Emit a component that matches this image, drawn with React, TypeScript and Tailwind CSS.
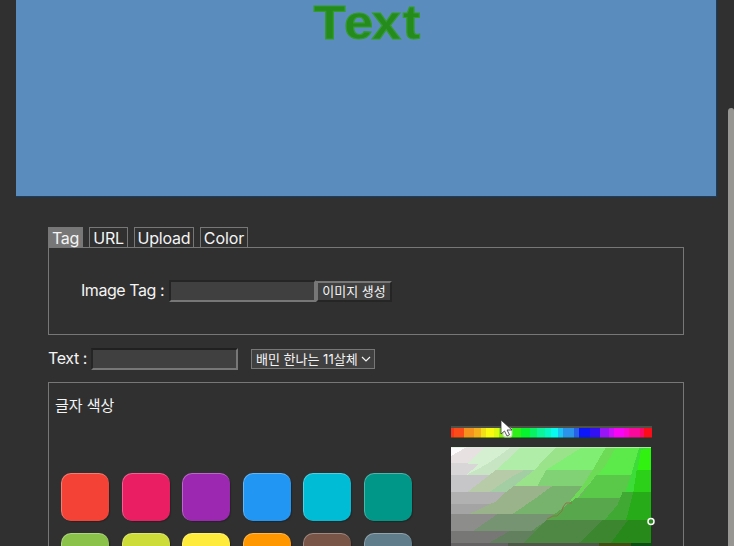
import type { ReactNode } from "react";

const swatches = [
  "bg-[#f44336]", "bg-[#e91e63]", "bg-[#9c27b0]", "bg-[#2196f3]", "bg-[#00bcd4]", "bg-[#009688]",
  "bg-[#8bc34a]", "bg-[#cddc39]", "bg-[#ffeb3b]", "bg-[#ff9800]", "bg-[#795548]", "bg-[#607d8b]",
];

// Each hue runs from its start position to the right end, under the next one.
const hues: [number, string][] = [
  [0, "#fb3519"], [3, "#fb4b18"], [13, "#f5921d"], [23, "#f5b01d"], [30, "#f0df17"], [35, "#f8fa10"], [43, "#dcfa10"],
  [48, "#8bed10"], [61, "#30ee18"], [70, "#06f430"], [79, "#08f264"], [86, "#0cf59b"], [94, "#08f8c4"], [100, "#08faf0"],
  [107, "#1cc4f4"], [112, "#2b93ea"], [123, "#2661e8"], [128, "#0c16f8"], [139, "#3310f4"], [149, "#9815f8"],
  [158, "#cb10f8"], [163, "#f805f5"], [173, "#fa08d2"], [178, "#fb089c"], [189, "#fb0868"], [193, "#fb0c18"],
];

// Saturation and brightness bands, painted back to front.
const shades: [string, string][] = [
  ["15,97 615,97 615,145 15,145", "#e8e1e1"],
  ["15,97 62,97 15,124", "#fdfbfc"],
  ["15,145 615,145 615,182 15,182", "#d8d6d6"],
  ["15,182 615,182 615,232 15,232", "#c6c5c7"],
  ["15,232 615,232 615,268 15,268", "#b2b1b1"],
  ["15,268 615,268 615,298 15,298", "#a5a4a4"],
  ["15,298 615,298 615,350 15,350", "#8d8d8c"],
  ["15,350 615,350 615,384 15,384", "#777876"],
  ["15,384 615,384 615,396 15,396", "#646263"],
  ["115,97 615,97 615,182 60,182 100,147 65,147", "#d5efd1"],
  ["195,97 615,97 615,182 60,182 125,147 165,120", "#c7e5c2"],
  ["150,166 615,166 615,232 65,232", "#b8cba8"],
  ["235,166 615,166 615,232 130,232 200,185", "#a3cea3"],
  ["225,97 615,97 615,166 150,166 190,130", "#b0eda8"],
  ["330,97 615,97 615,213 205,213 265,166", "#9be38b"],
  ["410,97 615,97 615,166 300,166", "#80ee72"],
  ["300,166 615,166 615,213 275,213", "#80d275"],
  ["205,213 615,213 615,298 70,298 150,260 180,232", "#9bb38b"],
  ["320,213 615,213 615,298 200,298 270,250", "#78b36e"],
  ["155,298 615,298 615,350 80,350", "#769472"],
  ["330,298 615,298 615,350 255,350", "#5c8f52"],
  ["190,350 615,350 615,384 130,384", "#63805e"],
  ["480,97 615,97 615,182 450,182 385,262 370,262 410,213 440,166", "#6edb57"],
  ["390,250 615,250 615,317 300,317 370,265", "#59a74d"],
  ["450,182 615,182 615,250 400,250", "#5ac949"],
  ["510,97 615,97 615,182 455,182 480,150", "#5bea49"],
  ["580,97 615,97 615,232 538,232 555,182", "#3edc38"],
  ["530,232 615,232 615,317 475,317 515,270", "#40a934"],
  ["585,106 615,100 615,166 575,166", "#30f110"],
  ["572,166 615,166 615,232 562,232", "#2dd018"],
  ["562,232 615,232 615,317 540,317 550,280", "#28ab19"],
  ["300,317 615,317 615,384 235,384", "#4f8845"],
  ["470,317 615,317 615,384 400,384", "#3d8630"],
  ["545,317 615,317 615,384 495,384", "#27891a"],
  ["185,384 615,384 615,396 185,396", "#50584a"],
  ["460,384 555,384 555,396 460,396", "#444d17"],
  ["555,384 615,384 615,396 555,396", "#104c18"],
];

function Tab({ children, className }: { children: ReactNode; className: string }) {
  return <button className={`h-[21px] border border-[#777] text-base leading-[20px] whitespace-nowrap ${className}`}>{children}</button>;
}

function ColorPicker() {
  return (
    <svg width="206" height="131" viewBox="0 0 206 131" className="block overflow-visible">
      <rect x="0" y="11.5" width="201" height="1" fill="#68705f" />
      {hues.map(([start, color]) => (
        <rect key={start} x={start} y="13" width={201 - start} height="10" fill={color} />
      ))}
      <rect x="0" y="22" width="201" height="2" fill="#143d18" opacity=".5" />
      <g transform="translate(0 32)">
        <g transform="scale(.33333) translate(-15 -97)" shapeRendering="crispEdges">
          {shades.map(([points, fill], i) => <polygon key={i} points={points} fill={fill} />)}
        </g>
        <path d="M0 .5H200" stroke="#d9efd5" opacity=".65" />
        <path d="M200.5 0V99" stroke="#124414" />
        <path d="M96 72l6-3h4l5-5 1-4 3-4h6" fill="none" stroke="#8c7645" />
      </g>
      <rect x="52" y="13" width="9" height="9" rx="2" fill="#f6f8f4" stroke="#b5d7a6" />
      <circle cx="200" cy="106.5" r="3" fill="#27891a" stroke="#fff" strokeWidth="1.5" />
      <path d="M50 5v14l3.5-3 2.5 5 2.5-1.2-2.4-4.8H61z" fill="#fff" stroke="#333" strokeWidth=".8" />
    </svg>
  );
}

export default function App() {
  return (
    <div className="relative h-[546px] w-[734px] overflow-hidden bg-[#303030] font-['Inter','Noto_Sans_CJK_KR',sans-serif] text-[#f4f4f4]">
      <header className="ml-4 h-[197px] w-[701px] border-r border-b border-[#173f65] bg-[#5a8dbe]">
        <h1>
          <svg width="700" height="60" className="block overflow-visible">
            <text transform="scale(1.07 1)" x="278 306.5 332.5 361.5" y="39" className="fill-[#268b1d] stroke-[#329d29] font-['Liberation_Sans',sans-serif] text-[49px] font-bold [stroke-width:1.2px]">Text</text>
          </svg>
        </h1>
      </header>
      <main className="ml-12 w-[636px] pt-[30px]">
        <nav className="flex gap-[6px]">
          <Tab className="w-[35px] bg-[#777] tracking-[-0.4px]">Tag</Tab>
          <Tab className="w-[39px] tracking-[-0.3px]">URL</Tab>
          <Tab className="w-[60px] tracking-[-0.2px]">Upload</Tab>
          <Tab className="w-[48px] tracking-[-0.1px]">Color</Tab>
        </nav>
        <section className="-mt-px flex h-[88px] items-center border border-[#777] pl-8">
          <label className="w-[88px] pb-[2px] whitespace-nowrap tracking-[-0.45px]">Image Tag :</label>
          <input className="h-[22px] w-[147px] border-2 border-t-[#252525] border-r-[#777] border-b-[#777] border-l-[#252525] bg-[#404040]" />
          <button className="h-[21px] w-[76px] border-2 border-t-[#777] border-r-[#252525] border-b-[#252525] border-l-[#777] bg-[#404040] text-[13px] leading-[15px] whitespace-nowrap">이미지 생성</button>
        </section>
        <div className="flex h-[47px] items-center">
          <label className="w-[43px] pb-[2px] whitespace-nowrap tracking-[-0.4px]">Text :</label>
          <input className="h-[22px] w-[147px] border-2 border-t-[#202020] border-r-[#777] border-b-[#777] border-l-[#252525] bg-[#404040]" />
          <button className="ml-[13px] flex h-5 w-[124px] items-center justify-between border border-[#777] bg-[#404040] pr-[3px] pl-1 text-[13px] leading-[18px] whitespace-nowrap">
            배민 한나는 11살체
            <svg width="10" height="8" viewBox="0 0 10 8" fill="none" stroke="currentColor" strokeWidth="1.2"><path d="m1 2 4 4 4-4" /></svg>
          </button>
        </div>
        <section className="flex h-[300px] border border-[#777]">
          <div className="w-[402px]">
            <h2 className="pt-[10px] pl-[6px] text-[15px] leading-[26px]">글자 색상</h2>
            <div className="mt-[54px] ml-3 flex w-[364px] flex-wrap gap-x-[12.6px] gap-y-3">
              {swatches.map((color) => <button key={color} aria-label={color} className={`h-12 w-12 rounded-[10px] border-t border-l border-white/30 shadow-[1px_1px_1px_#252525] ${color}`} />)}
            </div>
          </div>
          <div className="pt-8"><ColorPicker /></div>
        </section>
      </main>
      <div className="absolute top-[108px] right-0 h-[500px] w-[6px] rounded-tl-[4px] rounded-tr-[3px] bg-[#989692]" />
    </div>
  );
}
